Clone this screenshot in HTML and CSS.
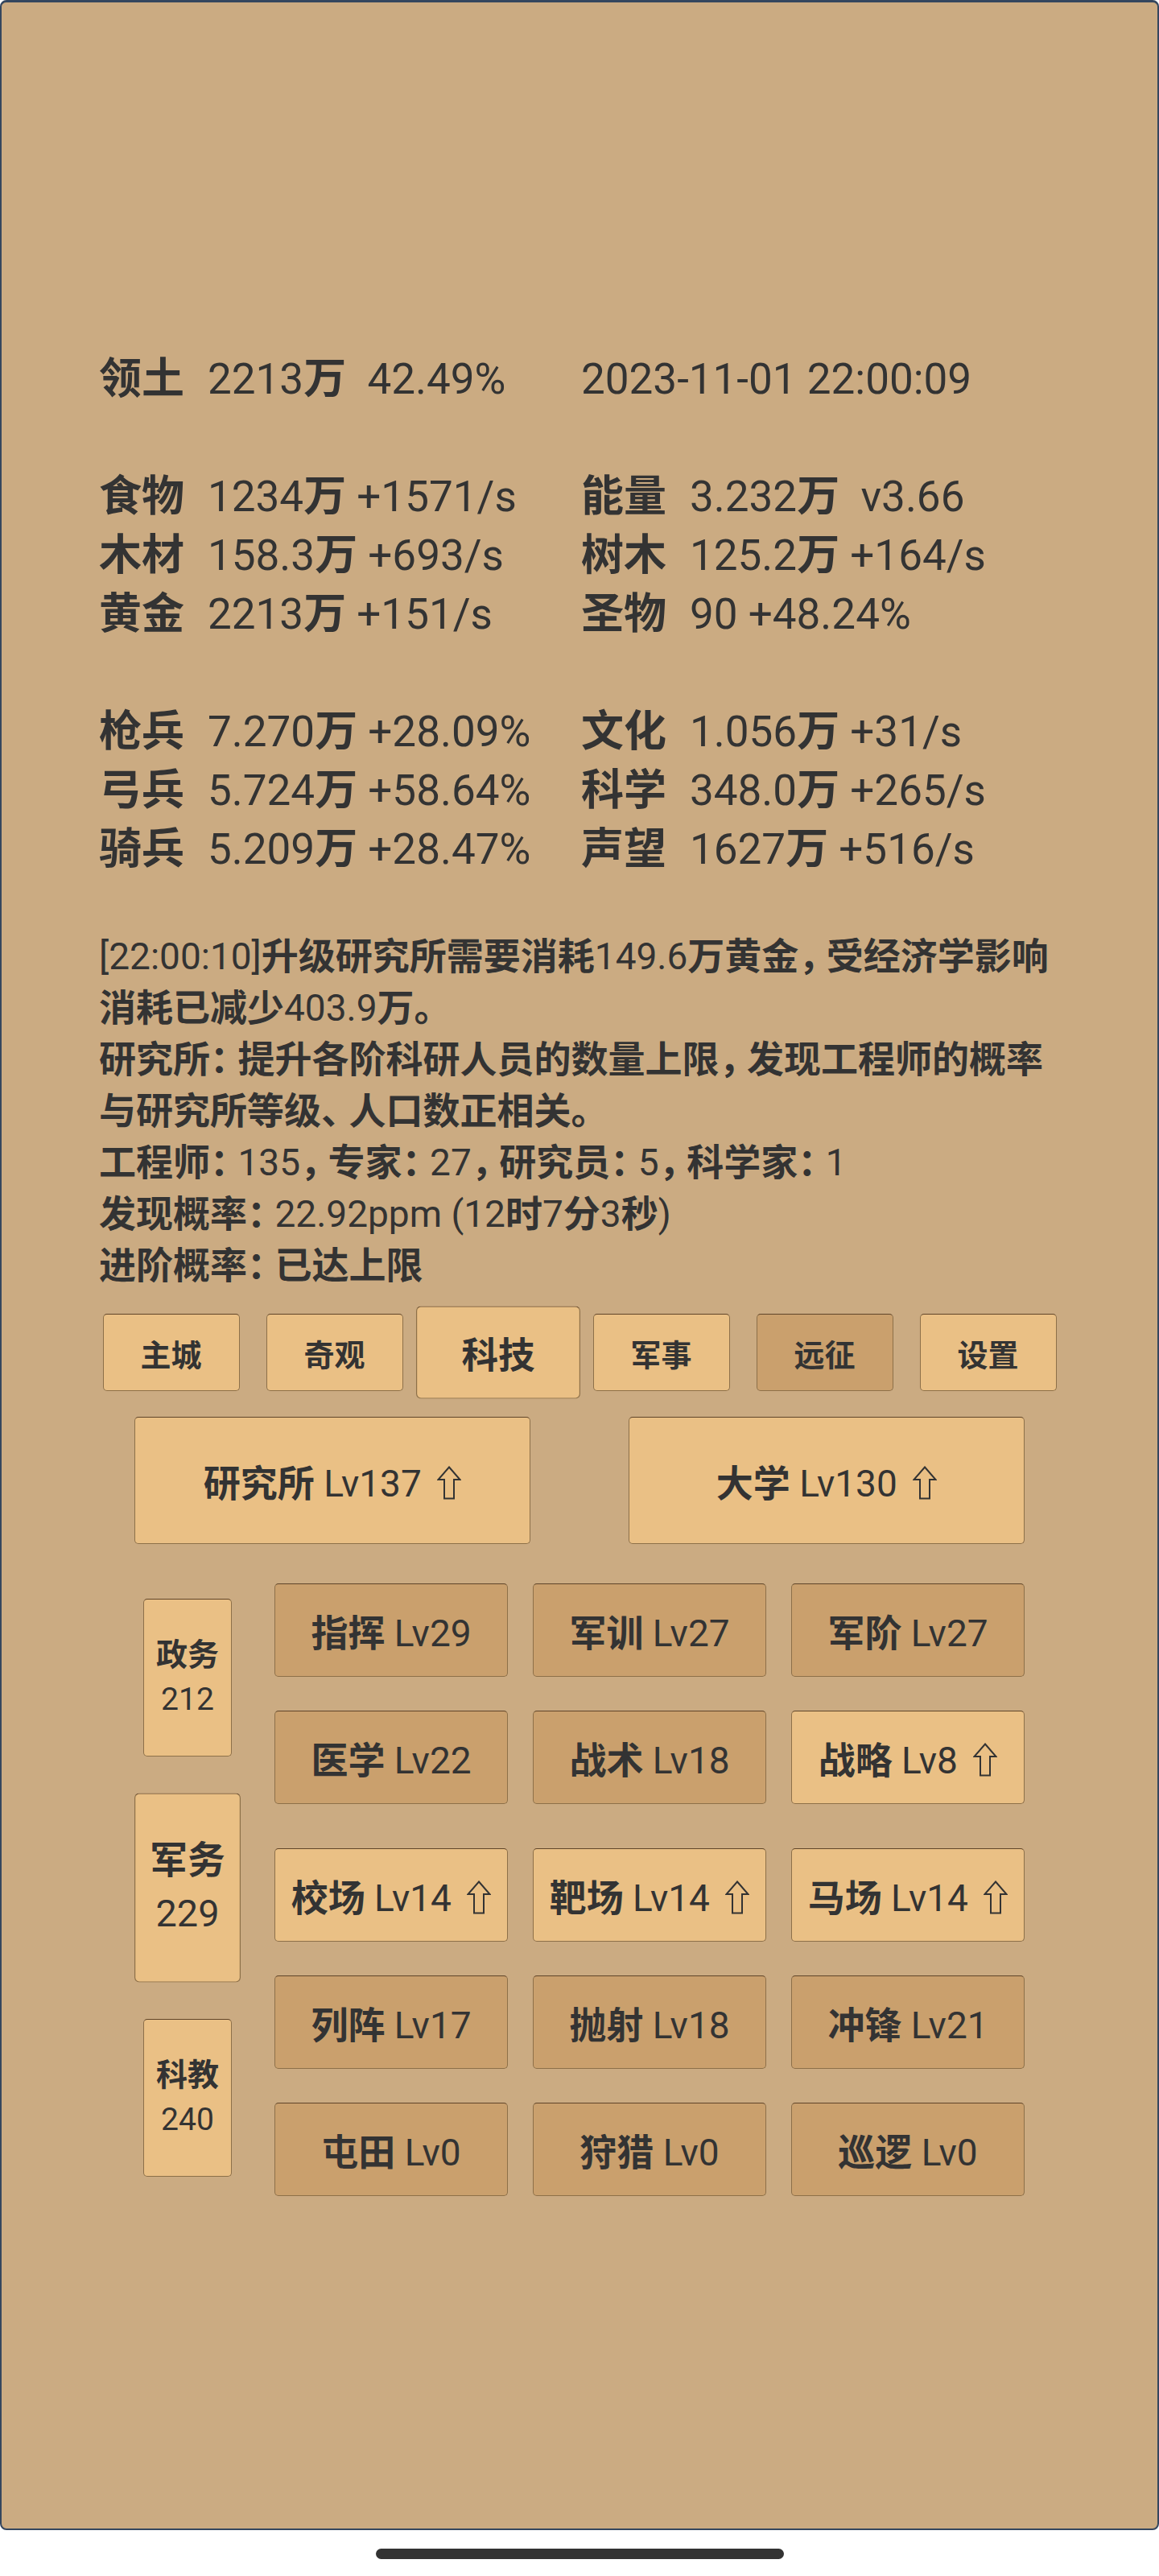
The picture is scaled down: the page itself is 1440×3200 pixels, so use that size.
FILE: index.html
```html
<!DOCTYPE html>
<html lang="zh-CN">
<head>
    <meta charset="UTF-8">
    <meta name="viewport" content="width=device-width, initial-scale=1.0">
    <title>科技</title>
    <link rel="stylesheet" href="styles.css">
</head>
<body>

    <div class="screen">

        <!-- Resources -->
        <div class="stats">
            <div class="cell"><b class="k">领土</b>2213<b>万</b>&nbsp;&nbsp;42.49%</div>
            <div class="cell">2023-11-01 22:00:09</div>
            <div class="blank"></div>

            <div class="cell"><b class="k">食物</b>1234<b>万</b> +1571/s</div>
            <div class="cell"><b class="k">能量</b>3.232<b>万</b>&nbsp;&nbsp;v3.66</div>
            <div class="cell"><b class="k">木材</b>158.3<b>万</b> +693/s</div>
            <div class="cell"><b class="k">树木</b>125.2<b>万</b> +164/s</div>
            <div class="cell"><b class="k">黄金</b>2213<b>万</b> +151/s</div>
            <div class="cell"><b class="k">圣物</b>90 +48.24%</div>
            <div class="blank"></div>

            <div class="cell"><b class="k">枪兵</b>7.270<b>万</b> +28.09%</div>
            <div class="cell"><b class="k">文化</b>1.056<b>万</b> +31/s</div>
            <div class="cell"><b class="k">弓兵</b>5.724<b>万</b> +58.64%</div>
            <div class="cell"><b class="k">科学</b>348.0<b>万</b> +265/s</div>
            <div class="cell"><b class="k">骑兵</b>5.209<b>万</b> +28.47%</div>
            <div class="cell"><b class="k">声望</b>1627<b>万</b> +516/s</div>
        </div>

        <!-- Message log -->
        <div class="log">
            <p><span class="n">[22:00:10]</span>升级研究所需要消耗<span class="n">149.6</span>万黄金<span class="p">，</span>受经济学影响<br>消耗已减少<span class="n">403.9</span>万。</p>
            <p>研究所<span class="p">：</span>提升各阶科研人员的数量上限<span class="p">，</span>发现工程师的概率<br>与研究所等级<span class="p">、</span>人口数正相关。</p>
            <p>工程师<span class="p">：</span><span class="n">135</span><span class="p">，</span>专家<span class="p">：</span><span class="n">27</span><span class="p">，</span>研究员<span class="p">：</span><span class="n">5</span><span class="p">，</span>科学家<span class="p">：</span><span class="n">1</span></p>
            <p>发现概率<span class="p">：</span><span class="n">22.92ppm (12</span>时<span class="n">7</span>分<span class="n">3</span>秒<span class="n">)</span></p>
            <p>进阶概率<span class="p">：</span>已达上限</p>
        </div>

        <!-- Main tabs -->
        <nav class="tabs">
            <div class="tab">主城</div>
            <div class="tab">奇观</div>
            <div class="tab active">科技</div>
            <div class="tab">军事</div>
            <div class="tab dim">远征</div>
            <div class="tab">设置</div>
        </nav>

        <!-- Buildings -->
        <div class="buildings">
            <div class="btn big"><span><b>研究所</b> Lv137 <svg class="arrow" viewBox="0 0 30 42"><path d="M15 1.5 L28.5 17 L21 17 L21 40.5 L9 40.5 L9 17 L1.5 17 Z"/></svg></span></div>
            <div class="btn big"><span><b>大学</b> Lv130 <svg class="arrow" viewBox="0 0 30 42"><path d="M15 1.5 L28.5 17 L21 17 L21 40.5 L9 40.5 L9 17 L1.5 17 Z"/></svg></span></div>
        </div>

        <!-- Tech board -->
        <div class="board">
            <div class="cats">
                <div class="cat"><b>政务</b><span>212</span></div>
                <div class="cat active"><b>军务</b><span>229</span></div>
                <div class="cat"><b>科教</b><span>240</span></div>
            </div>

            <div class="techs">
                <div class="row">
                    <div class="btn tech"><span><b>指挥</b> Lv29</span></div>
                    <div class="btn tech"><span><b>军训</b> Lv27</span></div>
                    <div class="btn tech"><span><b>军阶</b> Lv27</span></div>
                </div>
                <div class="row">
                    <div class="btn tech"><span><b>医学</b> Lv22</span></div>
                    <div class="btn tech"><span><b>战术</b> Lv18</span></div>
                    <div class="btn tech up"><span><b>战略</b> Lv8 <svg class="arrow" viewBox="0 0 30 42"><path d="M15 1.5 L28.5 17 L21 17 L21 40.5 L9 40.5 L9 17 L1.5 17 Z"/></svg></span></div>
                </div>
                <div class="row sep">
                    <div class="btn tech up"><span><b>校场</b> Lv14 <svg class="arrow" viewBox="0 0 30 42"><path d="M15 1.5 L28.5 17 L21 17 L21 40.5 L9 40.5 L9 17 L1.5 17 Z"/></svg></span></div>
                    <div class="btn tech up"><span><b>靶场</b> Lv14 <svg class="arrow" viewBox="0 0 30 42"><path d="M15 1.5 L28.5 17 L21 17 L21 40.5 L9 40.5 L9 17 L1.5 17 Z"/></svg></span></div>
                    <div class="btn tech up"><span><b>马场</b> Lv14 <svg class="arrow" viewBox="0 0 30 42"><path d="M15 1.5 L28.5 17 L21 17 L21 40.5 L9 40.5 L9 17 L1.5 17 Z"/></svg></span></div>
                </div>
                <div class="row">
                    <div class="btn tech"><span><b>列阵</b> Lv17</span></div>
                    <div class="btn tech"><span><b>抛射</b> Lv18</span></div>
                    <div class="btn tech"><span><b>冲锋</b> Lv21</span></div>
                </div>
                <div class="row">
                    <div class="btn tech"><span><b>屯田</b> Lv0</span></div>
                    <div class="btn tech"><span><b>狩猎</b> Lv0</span></div>
                    <div class="btn tech"><span><b>巡逻</b> Lv0</span></div>
                </div>
            </div>
        </div>

    </div>

    <div class="home-bar"></div>

</body>
</html>
```

FILE: styles.css
```css
/* Global */
body {
    margin: 0;
    background: #ffffff;
    font-family: Roboto, "Noto Sans CJK SC", sans-serif;
    color: #333333;
}

/* CJK text reads heavier than the latin digits in the app */
b {
    font-weight: bold;
}

.screen {
    width: 1440px;
    height: 3143px;
    box-sizing: border-box;
    background: #cbab82;
    border: 2px solid #34465e;
    border-top-width: 3px;
    border-radius: 8px;
    padding-top: 432px;
}

/* Resources */
.stats {
    display: grid;
    grid-template-columns: 599px 1fr;
    padding-left: 121px;
    font-size: 53px;
    line-height: 73px;
    white-space: nowrap;
}

.stats .blank {
    grid-column: 1 / -1;
    height: 73px;
}

.k {
    display: inline-block;
    width: 135px;
}

/* Log */
.log {
    margin-top: 64px;
    padding-left: 121px;
    font-size: 46px;
    line-height: 64px;
    font-weight: bold;
    white-space: nowrap;
}

.log p {
    margin: 0;
}

.log .n {
    font-weight: normal;
}

.log .p {
    letter-spacing: -0.25em;
}

/* Buttons */
.btn, .tab, .cat {
    box-sizing: border-box;
    display: flex;
    align-items: center;
    justify-content: center;
    background: #eac085;
    border: 1px solid #8d7049;
    border-top-color: #5f4429;
    border-radius: 5px;
    white-space: pre;
}

.arrow {
    width: 30px;
    height: 42px;
    margin-left: 8px;
    vertical-align: -4px;
    fill: none;
    stroke: #333333;
    stroke-width: 2;
}

/* Tabs */
.tabs {
    display: flex;
    justify-content: center;
    gap: 33px;
    margin-top: 28px;
}

.tab {
    width: 170px;
    height: 96px;
    font-size: 38px;
    font-weight: bold;
}

.tab.active {
    transform: scale(1.2);
}

.tab.dim {
    background: #caa06d;
}

/* Buildings */
.buildings {
    display: flex;
    justify-content: center;
    gap: 122px;
    margin-top: 32px;
}

.btn.big {
    width: 492px;
    height: 158px;
    font-size: 46px;
}

/* Tech board */
.board {
    display: flex;
    margin-top: 49px;
    padding-left: 176px;
}

.cats {
    width: 110px;
    display: flex;
    flex-direction: column;
    gap: 65px;
    padding-top: 19px;
}

.cat {
    height: 196px;
    flex-direction: column;
    font-size: 39px;
    line-height: 55px;
}

.cat.active {
    transform: scale(1.2);
}

.techs {
    margin-left: 53px;
}

.row {
    display: flex;
    gap: 31px;
}

.row + .row {
    margin-top: 42px;
}

.row.sep {
    margin-top: 55px;
}

.btn.tech {
    width: 290px;
    height: 116px;
    font-size: 46px;
    background: #caa06d;
}

.btn.tech.up {
    background: #eac085;
}

.home-bar {
    width: 507px;
    height: 13px;
    margin: 23px auto 0;
    border-radius: 7px;
    background: #333333;
}
```
